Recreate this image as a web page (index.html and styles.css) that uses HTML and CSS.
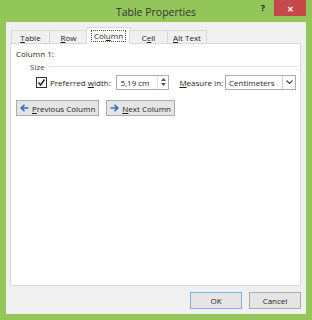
FILE: index.html
```html
<!DOCTYPE html>
<html lang="en">
<head>
  <meta charset="UTF-8" />
  <title>Table Properties</title>
  <link rel="stylesheet" href="styles.css">
</head>
<body>
  <div class="window">
    <div class="titlebar">
      <span class="title">Table Properties</span>
      <span class="help">?</span>
      <span class="close">&#x2715;</span>
    </div>
    <div class="client">
      <div class="tabs">
        <div class="tab"><span><u>T</u>able</span></div>
        <div class="tab"><span><u>R</u>ow</span></div>
        <div class="tab active"><span class="focus">Col<u>u</u>mn</span></div>
        <div class="tab"><span>C<u>e</u>ll</span></div>
        <div class="tab"><span><u>A</u>lt Text</span></div>
      </div>
      <div class="panel">
        <div class="heading">Column 1:</div>
        <div class="group">
          <span>Size</span>
          <span class="rule"></span>
        </div>
        <div class="row">
          <span class="check">
            <svg width="9" height="9" viewBox="0 0 9 9"><path d="M1.5 4.5 L3.5 7 L7.5 1.5" fill="none" stroke="#222" stroke-width="1.4"/></svg>
          </span>
          <label class="label">Preferred <u>w</u>idth:</label>
          <div class="spin">
            <span class="value">5,19 cm</span>
            <span class="arrows">
              <svg width="5" height="3" viewBox="0 0 5 3"><path d="M0 3 L2.5 0 L5 3Z" fill="#555"/></svg>
              <svg width="5" height="3" viewBox="0 0 5 3"><path d="M0 0 L2.5 3 L5 0Z" fill="#555"/></svg>
            </span>
          </div>
          <label class="label measure"><u>M</u>easure in:</label>
          <div class="select">
            <span class="value">Centimeters</span>
            <span class="drop">
              <svg width="7" height="4" viewBox="0 0 7 4"><path d="M0.5 0.5 L3.5 3.5 L6.5 0.5" fill="none" stroke="#444" stroke-width="1.1"/></svg>
            </span>
          </div>
        </div>
        <div class="nav">
          <button class="btn">
            <svg width="9" height="8" viewBox="0 0 9 8"><path d="M8.5 4 H1.5 M4.5 0.8 L1.2 4 L4.5 7.2" fill="none" stroke="#2f6fbf" stroke-width="1.6"/></svg>
            <span><u>P</u>revious Column</span>
          </button>
          <button class="btn">
            <svg width="9" height="8" viewBox="0 0 9 8"><path d="M0.5 4 H7.5 M4.5 0.8 L7.8 4 L4.5 7.2" fill="none" stroke="#2f6fbf" stroke-width="1.6"/></svg>
            <span><u>N</u>ext Column</span>
          </button>
        </div>
      </div>
      <div class="footer">
        <button class="btn wide default">OK</button>
        <button class="btn wide">Cancel</button>
      </div>
    </div>
  </div>
</body>
</html>
```

FILE: styles.css
```css
body {
  margin: 0;
  font-family: "Open Sans", "Noto Sans", sans-serif;
  font-size: 8px;
  color: #1e1e1e;
}
u {
  text-decoration-thickness: 1px;
  text-underline-offset: 1px;
}
.window {
  width: 312px;
  height: 320px;
  box-sizing: border-box;
  background-color: #93c65a;
  padding: 0 6px 6px 6px;
  display: flex;
  flex-direction: column;
}
.titlebar {
  height: 22px;
  position: relative;
  display: flex;
  align-items: center;
  justify-content: center;
}
.title {
  font-size: 10.5px;
  color: #333;
  margin-top: 2px;
}
.help {
  position: absolute;
  right: 41px;
  top: 1px;
  font-size: 9px;
  font-weight: bold;
  color: #222;
}
.close {
  position: absolute;
  right: 0;
  top: 0;
  width: 32px;
  height: 16px;
  background-color: #c7484b;
  color: #fff;
  font-size: 8px;
  font-weight: bold;
  display: flex;
  align-items: center;
  justify-content: center;
}
.client {
  flex: 1;
  background-color: #f0f0f0;
  display: flex;
  flex-direction: column;
  padding: 6px 5px 5px 4px;
}
.tabs {
  display: flex;
  align-items: flex-end;
  height: 15px;
  padding-left: 1px;
  position: relative;
  z-index: 1;
}
.tab {
  height: 12px;
  border: 1px solid #d9d9d9;
  border-bottom: none;
  margin-left: -1px;
  background-color: #f0f0f0;
  display: flex;
  align-items: center;
  justify-content: center;
  white-space: nowrap;
}
.tab:nth-child(1) { width: 37px; margin-left: 0; }
.tab:nth-child(2) { width: 37px; }
.tab:nth-child(3) { width: 41px; }
.tab:nth-child(4) { width: 37px; }
.tab:nth-child(5) { width: 38px; }
.tab.active {
  height: 16px;
  background-color: #fff;
  margin-bottom: -1px;
  margin-left: -2px;
  margin-right: -1px;
  width: 43px;
}
.focus {
  border: 1px dotted #555;
  padding: 0 2px;
  line-height: 10px;
}
.panel {
  height: 243px;
  box-sizing: border-box;
  background-color: #fff;
  border: 1px solid #d9d9d9;
  padding: 4px 4px 0 5px;
}
.heading {
  height: 12px;
}
.group {
  display: flex;
  align-items: center;
  gap: 4px;
  padding-left: 14px;
  height: 12px;
  color: #444;
}
.rule {
  flex: 1;
  border-top: 1px solid #e3e3e3;
  margin-right: -2px;
}
.row {
  display: flex;
  align-items: center;
  height: 16px;
  margin-top: 2px;
  padding-left: 20px;
  white-space: nowrap;
}
.check {
  width: 9px;
  height: 9px;
  border: 1px solid #333;
  background-color: #fff;
  display: flex;
  margin-right: 3px;
}
.label {
  width: 67px;
}
.measure {
  width: 46px;
  margin-left: 10px;
}
.spin, .select {
  height: 15px;
  box-sizing: border-box;
  border: 1px solid #abadb3;
  display: flex;
  align-items: stretch;
  flex-shrink: 0;
}
.spin {
  width: 53px;
}
.select {
  width: 71px;
}
.value {
  flex: 1;
  padding-left: 3px;
  display: flex;
  align-items: center;
}
.arrows {
  width: 10px;
  border-left: 1px solid #e3e3e3;
  display: flex;
  flex-direction: column;
  align-items: center;
  justify-content: center;
  gap: 2px;
}
.drop {
  width: 12px;
  border-left: 1px solid #cfcfcf;
  display: flex;
  align-items: center;
  justify-content: center;
}
.nav {
  display: flex;
  gap: 7px;
  margin-top: 10px;
}
.btn {
  font-family: inherit;
  font-size: 8px;
  color: #1e1e1e;
  height: 16px;
  padding: 0 3px 0 3px;
  background-color: #e5e5e5;
  border: 1px solid #acacac;
  border-radius: 0;
  display: flex;
  align-items: center;
  gap: 3px;
  white-space: nowrap;
}
.footer {
  flex: 1;
  display: flex;
  justify-content: flex-end;
  align-items: flex-end;
  gap: 7px;
}
.wide {
  width: 52px;
  height: 17px;
  justify-content: center;
}
.default {
  border-color: #7eb4ea;
}
```
